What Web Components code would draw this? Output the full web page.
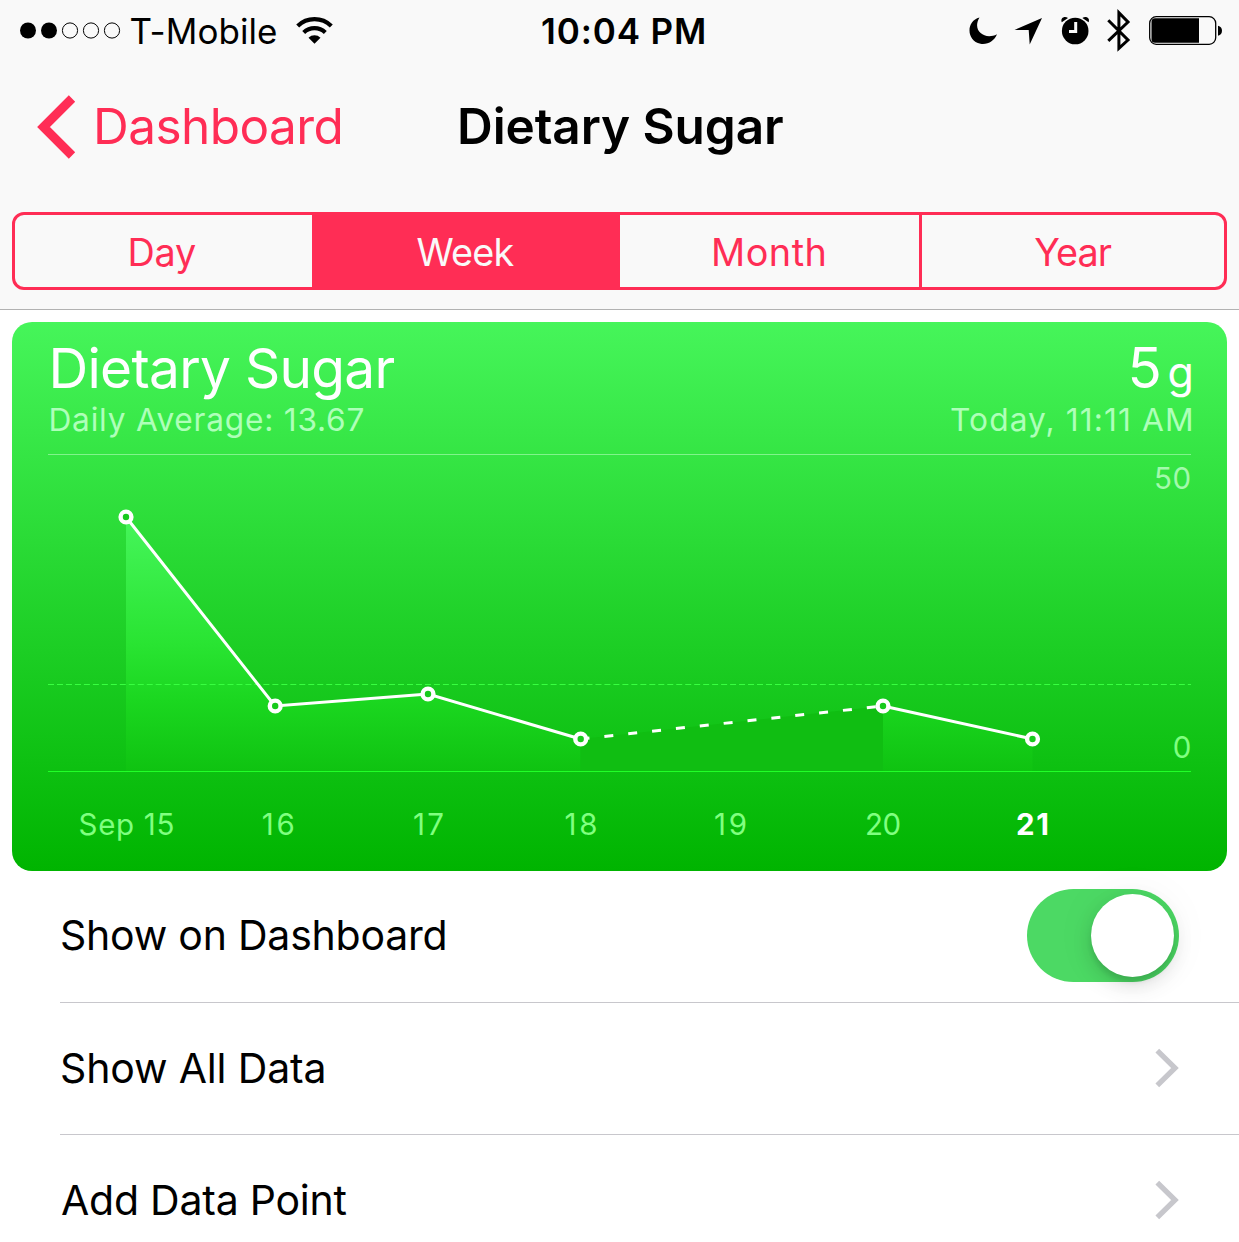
<!DOCTYPE html>
<html lang="en">
<head>
<meta charset="utf-8">
<title>Dietary Sugar</title>
<style>
html,body{margin:0;height:1242px;overflow:hidden;background:#fff}
body{font-family:Inter,"Liberation Sans",sans-serif;color:#000}
</style>
</head>
<body>
<health-screen></health-screen>
<script>
const define = (name, html, setup) => customElements.define(name, class extends HTMLElement {
  connectedCallback() {
    if (this.shadowRoot) return;
    const t = document.createElement('template');
    t.innerHTML = html;
    this.attachShadow({mode: 'open'}).append(t.content.cloneNode(true));
    if (setup) setup.call(this, this.shadowRoot);
  }
});

/* A line of text whose box is exactly the inked width, tracked to fit. */
const pen = document.createElement('canvas').getContext('2d');
define('ink-label', `<style>
  :host{display:block;flex:none;white-space:nowrap;line-height:1.2}
  span{display:block}
</style><span><slot></slot></span>`, function (root) {
  const size = +this.getAttribute('size'), weight = this.getAttribute('weight') || 400, w = +this.getAttribute('w');
  const text = this.textContent;
  pen.font = `${weight} ${size}px Inter, "Liberation Sans", sans-serif`;
  const m = pen.measureText(text);
  const left = m.actualBoundingBoxLeft, ink = left + m.actualBoundingBoxRight;
  const gap = text.length > 1 ? (w - ink) / (text.length - 1) : 0;
  this.style.width = w + 'px';
  const s = root.querySelector('span').style;
  s.fontSize = size + 'px';
  s.fontWeight = weight;
  s.letterSpacing = gap.toFixed(3) + 'px';
  s.marginLeft = left + 'px';
});

define('status-bar', `<style>
  :host{display:grid;grid-template-columns:1fr auto 1fr;align-items:center;height:61px;padding:0 16px 0 19px}
  div{display:flex;align-items:center}
  .carrier ink-label{margin:0 19px 0 9.5px}
  .time{padding-left:4px}
  .right{justify-content:flex-end}
  svg{display:block;flex:none}
</style>
<div class="carrier">
  <svg width="102" height="20" viewBox="19 20 102 20"><circle cx="28" cy="29.500" r="8"/><circle cx="49" cy="29.500" r="8"/><g fill="none" stroke="#000" stroke-width="1"><circle cx="70" cy="29.500" r="7.600"/><circle cx="91" cy="29.500" r="7.600"/><circle cx="112" cy="29.500" r="7.600"/></g></svg>
  <ink-label size="35" w="145.500">T-Mobile</ink-label>
  <svg width="38" height="32" viewBox="295.500 14.500 38 32"><g fill="none" stroke="#000"><path d="M298.2 25.4a24 24 0 0 1 33.6 0" stroke-width="4.2"/><path d="M304.2 31.9a15.6 15.6 0 0 1 21.6 0" stroke-width="4.2"/></g><path d="M309 37.3a8.6 8.6 0 0 1 12 0l-6 5.9z"/></svg>
</div>
<div class="time"><ink-label size="35" weight="600" w="162">10:04 PM</ink-label></div>
<div class="right">
  <svg width="254" height="44" viewBox="969 9 254 44">
    <path d="M979.5 17.5C966 21 966 40.500 980.500 43.800C988 45 994.500 40.500 997 34.200C985 40.500 971.500 31 979.500 17.500Z"/>
    <path d="M1042 18L1014.500 30H1028.700L1029.700 44.500Z"/>
    <circle cx="1075.200" cy="31" r="13.300"/><path d="M1061.800 22.300C1060 18 1064.500 15.600 1068 18Z M1088.600 22.300C1090.400 18 1085.900 15.600 1082.400 18Z"/>
    <path d="M1075.700 22v9.500h-6.700" fill="none" stroke="#f9f9f9" stroke-width="3"/>
    <path d="M1108.300 20.200L1128 40L1118.900 48.300V12.700L1128 22L1108.300 40.800" fill="none" stroke="#000" stroke-width="3"/>
    <rect x="1149.700" y="16.700" width="66" height="27.600" rx="6.500" fill="none" stroke="#000" stroke-width="1.300"/>
    <path d="M1155 18.300h44v24.500h-44q-3.500 0-3.500-3.500v-17.500q0-3.500 3.500-3.500z"/>
    <path d="M1218 25.700q4 1 4 5t-4 5z"/>
  </svg>
</div>`);

define('nav-bar', `<style>
  :host{display:grid;grid-template-columns:1fr auto 1fr;align-items:center;box-sizing:border-box;height:128px;padding:3px 34px 0 36px}
  .back{display:flex;align-items:center;gap:20.500px;color:#ff2d55}
  svg{display:block}
  .title{padding-left:2px}
</style>
<div class="back"><svg width="40.500" height="64" viewBox="36 94.500 40.500 64"><path d="M72 98L43.500 126.500L72 155" fill="none" stroke="#ff2d55" stroke-width="9"/></svg><ink-label size="49.500" w="243.500">Dashboard</ink-label></div>
<ink-label class="title" size="49.500" weight="600" w="323">Dietary Sugar</ink-label>`);

define('segment-control', `<style>
  :host{display:grid;grid-template-columns:296.500px 308px 299.500px 1fr;box-sizing:border-box;margin:23px 12px 0;height:78px;border:3px solid #ff2d55;border-radius:12px;overflow:hidden;color:#ff2d55}
  div{display:flex;align-items:center;justify-content:center;padding-top:3px}
  .on{background:#ff2d55;color:#f9f9f9}
  .last{border-left:3px solid #ff2d55}
</style>
<div><ink-label size="37.800" w="65.500">Day</ink-label></div><div class="on"><ink-label size="37.800" w="98">Week</ink-label></div><div><ink-label size="37.800" w="110.500">Month</ink-label></div><div class="last"><ink-label size="37.800" w="77.500">Year</ink-label></div>`);

define('trend-chart', `<style>
  :host{display:block}
  svg{display:block}
  text{font-family:Inter,"Liberation Sans",sans-serif;font-size:29.500px;text-anchor:middle;fill:#80ff80}
</style>
<svg width="1143" height="417" viewBox="48 454 1143 417">
  <defs><linearGradient id="area" gradientUnits="userSpaceOnUse" x1="0" y1="517" x2="0" y2="771"><stop offset="0" stop-color="#46f55b"/><stop offset=".5" stop-color="#29e432"/><stop offset=".72" stop-color="#1bd720"/><stop offset="1" stop-color="#0fc311"/></linearGradient></defs>
  <path d="M48 454.500H1191" stroke="#80f48b"/>
  <path fill="url(#area)" d="M126 517L275 706L428 694L580.500 739V771H126ZM883 706L1032.500 739V771H883Z"/>
  <path fill="#10be12" d="M580.500 739L883 706V771H580.500Z"/>
  <path d="M48 684.500H1191" stroke="#38ff40" stroke-dasharray="6 2.975"/>
  <path d="M48 771.500H1191" stroke="#20ff28"/>
  <g fill="none" stroke="#fff" stroke-width="3"><path d="M126 517L275 706L428 694L580.500 739M883 706L1032.500 739"/><path d="M580.500 739L883 706" stroke-dasharray="9 15"/></g>
  <g class="pts" fill="#18ca1c" stroke="#fff" stroke-width="4.400"><circle cx="126" cy="517" r="5.400"/><circle cx="275.200" cy="706" r="5.400"/><circle cx="428" cy="694" r="5.400"/><circle cx="580.700" cy="739" r="5.400"/><circle cx="883" cy="706" r="5.400"/><circle cx="1032.500" cy="739" r="5.400"/></g>
  <text x="1172.500" y="489.300" textLength="37" style="fill:#a3f9ac">50</text>
  <text x="1182" y="758.300" style="fill:#80ff80">0</text>
  <text x="126.500" y="835" textLength="96">Sep 15</text><text x="278.300" y="835" textLength="33">16</text><text x="428.500" y="835" textLength="31">17</text><text x="581" y="835" textLength="33">18</text><text x="730.500" y="835" textLength="33">19</text><text x="883" y="835" textLength="36">20</text><text x="1032.500" y="835" textLength="33" style="fill:#fff;font-weight:700">21</text>
</svg>`);

define('chart-card', `<style>
  :host{display:block;box-sizing:border-box;margin:12px 12px 0;height:549px;padding:19px 34.500px 0 36px;border-radius:20px;background:linear-gradient(#46f55a,#00b400);color:#fff;overflow:hidden}
  .row{display:flex;justify-content:space-between;align-items:center;box-sizing:border-box}
  .title{height:53px;padding:0 0 0 4.500px}
  .sub{height:51px;padding:2px 1.500px 0 2.500px;color:#aeffb9}
  .value{display:flex;align-items:baseline;gap:9px}
  trend-chart{margin-top:9px}
</style>
<div class="row title"><ink-label size="55" w="342">Dietary Sugar</ink-label><div class="value"><ink-label size="56.500" w="29">5</ink-label><ink-label size="43" w="23">g</ink-label></div></div>
<div class="row sub"><ink-label size="31.700" w="313">Daily Average: 13.67</ink-label><ink-label size="31.700" w="240">Today, 11:11 AM</ink-label></div>
<trend-chart></trend-chart>`);

define('toggle-switch', `<style>
  :host{display:flex;justify-content:flex-end;align-items:center;box-sizing:border-box;width:152.500px;height:93px;padding-right:5.500px;border-radius:46.500px;background:#4cd964}
  i{width:83px;height:83px;border-radius:50%;background:#fff;box-shadow:0 8px 20px rgba(0,0,0,.13),0 5px 5px rgba(0,0,0,.09),0 0 45px rgba(0,0,0,.05)}
</style><i></i>`);

define('chevron-icon', `<style>:host,svg{display:block}</style>
<svg width="24" height="40" viewBox="1155 1047.500 24 40"><path d="M1157.300 1050.200L1175 1067.500L1157.300 1084.800" fill="none" stroke="#c7c7cc" stroke-width="5.300"/></svg>`);

define('list-row', `<style>
  :host{display:flex;align-items:center;justify-content:space-between;box-sizing:border-box;height:132px;margin-left:60px;padding:0 60px 2px 2px;border-bottom:1px solid #c8c7cc}
</style><slot></slot>`);

define('health-screen', `<style>
  :host{display:flex;flex-direction:column;width:1239px;height:1242px;overflow:hidden}
  header{box-sizing:border-box;flex:none;height:310px;background:#f9f9f9;border-bottom:1px solid #b2b2b2}
  chart-card,list-row{flex:none}
  .follow{padding-top:2.500px}
</style>
<header><status-bar></status-bar><nav-bar></nav-bar><segment-control></segment-control></header>
<chart-card></chart-card>
<list-row><ink-label size="41" w="382.500">Show on Dashboard</ink-label><toggle-switch></toggle-switch></list-row>
<list-row><ink-label class="follow" size="41" w="261.500">Show All Data</ink-label><chevron-icon></chevron-icon></list-row>
<list-row><ink-label class="follow" size="41" w="284.500">Add Data Point</ink-label><chevron-icon></chevron-icon></list-row>`);
</script>
</body>
</html>
